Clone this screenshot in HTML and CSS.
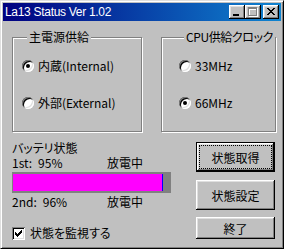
FILE: index.html
```html
<!DOCTYPE html>
<html lang="ja">
<head>
  <meta charset="UTF-8">
  <title>La13 Status Ver 1.02</title>
  <link rel="stylesheet" href="styles.css">
</head>
<body>
  <div class="window">
    <div class="titlebar">
      <span class="title">La13 Status Ver 1.02</span>
      <div class="caption-buttons">
        <span class="cap-btn">
          <svg width="16" height="14" shape-rendering="crispEdges"><rect x="4" y="9" width="6" height="2" fill="#000"/></svg>
        </span>
        <span class="cap-btn">
          <svg width="16" height="14" shape-rendering="crispEdges">
            <path d="M4 3h9v9H4z M5 5v6h7V5z" fill="#fff" fill-rule="evenodd"/>
            <path d="M3 2h9v9H3z M4 4v6h7V4z" fill="#808080" fill-rule="evenodd"/>
          </svg>
        </span>
        <span class="cap-btn close">
          <svg width="16" height="14" shape-rendering="crispEdges">
            <path d="M4 3h2v1H4zM10 3h2v1h-2zM5 4h2v1H5zM9 4h2v1H9zM6 5h4v1H6zM7 6h2v1H7zM6 7h4v1H6zM5 8h2v1H5zM9 8h2v1H9zM4 9h2v1H4zM10 9h2v1h-2z" fill="#000"/>
          </svg>
        </span>
      </div>
    </div>

    <div class="client">
      <div class="groups">
        <fieldset class="group group-power">
          <legend>主電源供給</legend>
          <div class="option"><span class="radio checked"></span>内蔵(Internal)</div>
          <div class="option"><span class="radio"></span>外部(External)</div>
        </fieldset>
        <fieldset class="group group-cpu">
          <legend>CPU供給クロック</legend>
          <div class="option"><span class="radio"></span>33MHz</div>
          <div class="option"><span class="radio checked"></span>66MHz</div>
        </fieldset>
      </div>

      <div class="bottom">
        <div class="battery">
          <div class="battery-title">バッテリ状態</div>
          <div class="battery-row">
            <div class="reading"><span>1st:</span><span>95%</span></div>
            <span>放電中</span>
          </div>
          <div class="bar"><div class="bar-fill" style="width: 95%"></div></div>
          <div class="battery-row second">
            <div class="reading"><span>2nd:</span><span>96%</span></div>
            <span>放電中</span>
          </div>
          <div class="check-row">
            <span class="checkbox">
              <svg width="13" height="13" shape-rendering="crispEdges">
                <path d="M9 3h1v1H9zM8 4h2v1H8zM3 5h1v1H3zM7 5h3v1H7zM3 6h2v1H3zM6 6h3v1H6zM3 7h5v1H3zM4 8h3v1H4zM5 9h1v1H5z" fill="#000"/>
              </svg>
            </span>
            状態を監視する
          </div>
        </div>

        <div class="actions">
          <button class="btn default">状態取得</button>
          <button class="btn middle">状態設定</button>
          <button class="btn small">終了</button>
        </div>
      </div>
    </div>
  </div>
</body>
</html>
```

FILE: styles.css
```css
* {
  box-sizing: border-box;
  margin: 0;
  padding: 0;
}

body {
  width: 284px;
  height: 249px;
  overflow: hidden;
  background-color: #C0C0C0;
  font-family: "Noto Sans CJK JP", sans-serif;
  font-size: 12px;
  font-feature-settings: "palt";
  color: #000;
}

.window {
  width: 284px;
  height: 249px;
  background-color: #C0C0C0;
  border: 1px solid;
  border-color: #DFDFDF #000 #000 #DFDFDF;
  box-shadow: inset 1px 1px #fff, inset -1px -1px #808080;
  padding: 2px;
  display: flex;
  flex-direction: column;
}

.titlebar {
  height: 18px;
  flex-shrink: 0;
  background: linear-gradient(90deg, #000080, #1084D0);
  color: #fff;
  display: flex;
  align-items: center;
  padding: 0 2px;
}

.title {
  font-family: "Liberation Sans", Arial, sans-serif;
  font-size: 12px;
  letter-spacing: -0.3px;
}

.caption-buttons {
  margin-left: auto;
  display: flex;
}

.cap-btn {
  width: 16px;
  height: 14px;
  background-color: #C0C0C0;
  box-shadow: inset -1px -1px #000, inset 1px 1px #fff, inset -2px -2px #808080, inset 2px 2px #DFDFDF;
}

.cap-btn svg {
  display: block;
}

.cap-btn.close {
  margin-left: 2px;
}

.client {
  padding: 9px 0 0 9px;
}

.groups {
  display: flex;
  gap: 19px;
}

.group {
  border: 1px solid #808080;
  box-shadow: 1px 1px #fff, inset 1px 1px #fff;
  height: 102px;
  padding: 15px 0 0 9px;
  display: flex;
  flex-direction: column;
  gap: 23px;
}

.group legend {
  margin-left: 5px;
  padding: 0 2px;
  line-height: 14px;
  white-space: nowrap;
  background-color: #C0C0C0;
}

.group-power {
  width: 130px;
}

.group-cpu {
  width: 112px;
  padding-left: 17px;
}

.group-cpu legend {
  letter-spacing: -0.4px;
}

.option {
  display: flex;
  align-items: center;
  gap: 4px;
  height: 14px;
  line-height: 14px;
  white-space: nowrap;
}

.radio {
  width: 12px;
  height: 12px;
  border-radius: 50%;
  background-color: #fff;
  box-shadow: inset 1px 1px #808080, inset -1px -1px #fff, inset 2px 2px #000, inset -2px -2px #DFDFDF;
  display: flex;
  align-items: center;
  justify-content: center;
}

.radio.checked::after {
  content: "";
  width: 4px;
  height: 4px;
  border-radius: 50%;
  background-color: #000;
}

.bottom {
  display: flex;
  margin-top: 9px;
}

.battery {
  width: 160px;
}

.battery-title {
  line-height: 14px;
}

.battery-row {
  display: grid;
  grid-template-columns: 95px auto;
  line-height: 14px;
  margin-top: 1px;
  white-space: nowrap;
}

.battery-row.second {
  margin-top: 2px;
}

.reading {
  display: flex;
  gap: 6px;
}

.bar {
  margin-top: 2px;
  width: 159px;
  height: 21px;
  background-color: #808080;
  padding: 2px 0 2px 1px;
}

.bar-fill {
  height: 100%;
  background-color: #FF00FF;
  border-right: 1px solid #0000FF;
}

.check-row {
  margin-top: 17px;
  display: flex;
  align-items: center;
  gap: 5px;
  line-height: 14px;
}

.checkbox {
  width: 13px;
  height: 13px;
  background-color: #fff;
  box-shadow: inset 1px 1px #808080, inset -1px -1px #fff, inset 2px 2px #000, inset -2px -2px #DFDFDF;
}

.checkbox svg {
  display: block;
}

.actions {
  margin-left: 24px;
  margin-top: 1px;
  width: 79px;
  display: flex;
  flex-direction: column;
}

.btn {
  height: 30px;
  font: inherit;
  color: #000;
  background-color: #C0C0C0;
  border: none;
  box-shadow: inset -1px -1px #000, inset 1px 1px #fff, inset -2px -2px #808080, inset 2px 2px #DFDFDF;
  margin-bottom: 8px;
}

.btn.default {
  box-shadow: inset 0 0 0 1px #000, inset -2px -2px #000, inset 2px 2px #fff, inset -3px -3px #808080, inset 3px 3px #DFDFDF;
  outline: 1px dotted #000;
  outline-offset: -4px;
}

.btn.middle {
  margin-bottom: 7px;
}

.btn.small {
  height: 22px;
  margin-bottom: 0;
}
```
